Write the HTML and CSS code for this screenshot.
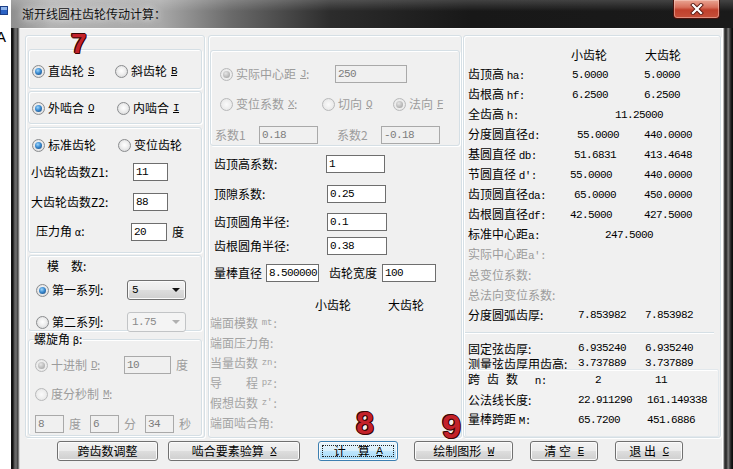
FILE: index.html
```html
<!DOCTYPE html>
<html lang="zh-CN">
<head>
<meta charset="utf-8">
<title>渐开线圆柱齿轮传动计算</title>
<link rel="stylesheet" href="styles.css">
</head>
<body>
<div class="screen">
  <div class="strip"><div class="strip-icon"></div><div class="strip-a">A</div></div>
  <div class="window">
    <div class="titlebar">
      <span class="title">渐开线圆柱齿轮传动计算：</span>
      <div class="close">
        <svg width="14" height="12" viewBox="0 0 14 12"><path d="M3 2 L11 10 M11 2 L3 10" stroke="#5a1a12" stroke-width="4" stroke-linecap="square"/><path d="M3 2 L11 10 M11 2 L3 10" stroke="#fff" stroke-width="2.2" stroke-linecap="square"/></svg>
      </div>
    </div>
    <div class="body">
      <div class="fl"></div>
      <div class="client">
        <div class="cols">
          <!-- left column -->
          <div class="grp lcol">
            <div class="grp g1">
              <div class="rrow">
                <div class="opt w83"><span class="radio on"></span>直齿轮 <u class="m">S</u></div>
                <div class="opt"><span class="radio"></span>斜齿轮 <u class="m">B</u></div>
              </div>
            </div>
            <div class="grp g2">
              <div class="rrow">
                <div class="opt w85"><span class="radio on"></span>外啮合 <u class="m">O</u></div>
                <div class="opt"><span class="radio"></span>内啮合 <u class="m">I</u></div>
              </div>
            </div>
            <div class="grp g3">
              <div class="rrow pl1">
                <div class="opt w86"><span class="radio on"></span>标准齿轮</div>
                <div class="opt"><span class="radio"></span>变位齿轮</div>
              </div>
              <div class="frow">
                <span class="lab w102">小齿轮齿数Z1:</span><span class="inp w35">11</span>
              </div>
              <div class="frow">
                <span class="lab w102">大齿轮齿数Z2:</span><span class="inp w35">88</span>
              </div>
              <div class="frow pl5">
                <span class="lab w95">压力角 <span class="sym">α</span>:</span><span class="inp w36">20</span><span class="unit">度</span>
              </div>
            </div>
            <div class="grp g4a">
              <div class="mlabel">模　数:</div>
              <div class="crow first">
                <div class="opt w91"><span class="radio on"></span>第一系列:</div>
                <div class="combo"><span class="m">5</span><span class="arrow"></span></div>
              </div>
              <div class="crow second">
                <div class="opt w91"><span class="radio"></span>第二系列:</div>
                <div class="combo dis"><span class="m">1.75</span><span class="arrow"></span></div>
              </div>
            </div>
            <fieldset class="g4b">
              <legend>螺旋角 <span class="sym">β</span>:</legend>
              <div class="drow r1">
                <div class="opt w89 dt"><span class="radio dis on"></span>十进制 <u class="m">D</u>:</div>
                <span class="inp dis w47">10</span><span class="unit dt">度</span>
              </div>
              <div class="drow r2">
                <div class="opt dt"><span class="radio dis"></span>度分秒制 <u class="m">M</u>:</div>
              </div>
              <div class="drow r3">
                <span class="inp dis w29">8</span><span class="unit dt">度</span>
                <span class="inp dis w29 ml9">6</span><span class="unit dt">分</span>
                <span class="inp dis w29 ml9">34</span><span class="unit dt">秒</span>
              </div>
            </fieldset>
          </div>

          <!-- middle column -->
          <div class="grp mcol">
            <div class="grp mg">
              <div class="rrow">
                <div class="opt w115 dt"><span class="radio dis on"></span>实际中心距 <u class="m">J</u>:</div>
                <span class="inp dis w72">250</span>
              </div>
              <div class="rrow mt14">
                <div class="opt w102 dt"><span class="radio dis"></span>变位系数 <u class="m">X</u>:</div>
                <div class="opt w71 dt"><span class="radio dis"></span>切向 <u class="m">Q</u></div>
                <div class="opt dt"><span class="radio dis on"></span>法向 <u class="m">F</u></div>
              </div>
              <div class="krow">
                <span class="lab w44 dt">系数1</span><span class="inp dis w59">0.18</span>
                <span class="lab w44 dt ml19">系数2</span><span class="inp dis w59">-0.18</span>
              </div>
            </div>
            <div class="mrow m9"><span class="lab w112">齿顶高系数:</span><span class="inp w59">1</span></div>
            <div class="mrow m12"><span class="lab w113">顶隙系数:</span><span class="inp w59">0.25</span></div>
            <div class="mrow m10"><span class="lab w113">齿顶圆角半径:</span><span class="inp w60">0.1</span></div>
            <div class="mrow m6"><span class="lab w113">齿根圆角半径:</span><span class="inp w60">0.38</span></div>
            <div class="mrow m9">
              <span class="lab w52">量棒直径</span><span class="inp w53">8.500000</span>
              <span class="lab w53 ml10">齿轮宽度</span><span class="inp w54">100</span>
            </div>
            <div class="mhead"><span class="w73">小齿轮</span><span>大齿轮</span></div>
            <div class="grow">端面模数 <span class="m small">mt</span>:</div>
            <div class="grow">端面压力角:</div>
            <div class="grow">当量齿数 <span class="m small">zn</span>:</div>
            <div class="grow">导　　程 <span class="m small">pz</span>:</div>
            <div class="grow">假想齿数 <span class="m small">z'</span>:</div>
            <div class="grow">端面啮合角:</div>
          </div>

          <!-- right column -->
          <div class="grp rcol">
            <div class="res head"><span></span><span class="v o1 cj">小齿轮</span><span class="v o1 cj">大齿轮</span></div>
            <div class="res"><span>齿顶高 <b class="m">ha:</b></span><span class="v o2">5.0000</span><span class="v">5.0000</span></div>
            <div class="res"><span>齿根高 <b class="m">hf:</b></span><span class="v o2">6.2500</span><span class="v">6.2500</span></div>
            <div class="res"><span>全齿高 <b class="m">h:</b></span><span class="v span2 o45">11.25000</span></div>
            <div class="res"><span>分度圆直径<b class="m">d:</b></span><span class="v o7">55.0000</span><span class="v">440.0000</span></div>
            <div class="res"><span>基圆直径 <b class="m">db:</b></span><span class="v o4">51.6831</span><span class="v">413.4648</span></div>
            <div class="res"><span>节圆直径 <b class="m">d':</b></span><span class="v">55.0000</span><span class="v">440.0000</span></div>
            <div class="res"><span>齿顶圆直径<b class="m">da:</b></span><span class="v o4">65.0000</span><span class="v">450.0000</span></div>
            <div class="res"><span>齿根圆直径<b class="m">df:</b></span><span class="v">42.5000</span><span class="v">427.5000</span></div>
            <div class="res"><span>标准中心距<b class="m">a:</b></span><span class="v span2 o35">247.5000</span></div>
            <div class="res dt"><span>实际中心距<b class="m">a':</b></span></div>
            <div class="res dt"><span>总变位系数:</span></div>
            <div class="res dt"><span>总法向变位系数:</span></div>
            <div class="res"><span>分度圆弧齿厚:</span><span class="v o8">7.853982</span><span class="v o1">7.853982</span></div>
            <div class="sub s2">
              <div class="res r15"><span>固定弦齿厚:</span><span class="v o8">6.935240</span><span class="v o1">6.935240</span></div>
              <div class="res r15"><span>测量弦齿厚用齿高:</span><span class="v o8">3.737889</span><span class="v o1">3.737889</span></div>
            </div>
            <div class="sub s3">
              <div class="res"><span class="sp">跨齿数 <b class="m">n:</b></span><span class="v o25">2</span><span class="v o11">11</span></div>
              <div class="res"><span>公法线长度:</span><span class="v o8">22.911290</span><span class="v o3">161.149338</span></div>
              <div class="res"><span>量棒跨距 <b class="m">M:</b></span><span class="v o8">65.7200</span><span class="v o3">451.6886</span></div>
            </div>
          </div>
        </div>

        <div class="btns">
          <div class="btn b1">跨齿数调整</div>
          <div class="btn b2">啮合要素验算 <u class="m">X</u></div>
          <div class="btn b3 focus">计　算 <u class="m">A</u></div>
          <div class="btn b4">绘制图形 <u class="m">W</u></div>
          <div class="btn b5">清 空 <u class="m">E</u></div>
          <div class="btn b6">退 出 <u class="m">C</u></div>
        </div>

        <span class="mark k7">7</span>
        <span class="mark k8">8</span>
        <span class="mark k9">9</span>
      </div>
      <div class="fr"></div>
    </div>
  </div>
</div>
</body>
</html>
```

FILE: styles.css
```css
* { box-sizing: border-box; }
html, body { margin: 0; padding: 0; }
body {
  width: 733px; height: 469px; overflow: hidden;
  font: 12px/16px "Noto Sans CJK SC", "Noto Sans", sans-serif;
  color: #000; background: #fff;
}
u { text-decoration: underline; text-underline-offset: 1px; }
b { font-weight: normal; }
.m { font-family: "Liberation Mono", "DejaVu Sans Mono", monospace; font-size: 11px; letter-spacing: -0.6px; }
.small { font-size: 9px; letter-spacing: 0; }
.sym { font-family: "DejaVu Sans", sans-serif; font-size: 10px; }
.dt { color: #9c9c9c; }

.screen { display: flex; width: 733px; height: 469px; position: relative; overflow: hidden; }
.strip { width: 11px; background: #fff; overflow: hidden; display: flex; flex-direction: column; }
.strip-icon { width: 8px; height: 9px; margin-top: 6px; background: #2b62c4; border: 1px solid #1c3f88; box-shadow: inset 0 3px 0 #8fb4ea; }
.strip-a { font: 15px/15px "Liberation Sans", sans-serif; margin: 14px 0 0 -4px; }

.window { flex: 1; display: flex; flex-direction: column; background: #1e1e1e; }
.titlebar {
  height: 28px; display: flex; align-items: flex-start;
  background:
    linear-gradient(to bottom, rgba(255,255,255,.18), rgba(255,255,255,0) 40%),
    linear-gradient(to right, #8e8e8e 0, #b2b2b2 40px, #a8a8a8 150px, #6a6a6a 220px, #2c2c2c 320px, #181818 460px, #1a1a1a 100%);
}
.title { margin: 6px 0 0 11px; color: #111; text-shadow: 0 0 6px #e6e6e6, 0 0 10px #dcdcdc; }
.close {
  margin-left: auto; margin-right: 13px; width: 47px; height: 19px;
  border: 1px solid #4a130c; border-top: none; border-radius: 0 0 4px 4px;
  background: linear-gradient(#e9a593 0, #d8705c 40%, #c0402c 55%, #c6503a 100%);
  box-shadow: inset 0 0 0 1px rgba(255,220,210,.45);
  display: flex; align-items: center; justify-content: center;
}

.body { flex: 1; display: flex; }
.fl { width: 9px; background: linear-gradient(to right, #111 0, #111 2px, #4e4e4e 3px, #707070 5px, #3a3a3a 7px, #bdbdbd 8px, #e8e8e8 9px); }
.fr { width: 11px; background: linear-gradient(to right, #fff 0, #fff 1px, #6a6a6a 2px, #2a2a2a 3px, #3a3a3a 5px, #858585 6px, #3a3a3a 8px, #0e0e0e 10px); }

.client {
  flex: 1; position: relative; background: #f0f0f0;
  border-top: 1px solid #fafafa;
  padding: 6px 1px 0 5px;
  display: flex; flex-direction: column;
}
.cols { display: flex; height: 403px; }

.grp { border: 1px solid #d5dfe5; border-radius: 3px; box-shadow: inset 1px 1px 0 #fff, 1px 1px 0 #fff; }

/* ---------- left column ---------- */
.lcol { width: 180px; margin-right: 3px; display: flex; flex-direction: column; padding: 13px 2px 0 2px; }
.g1 { height: 40px; padding: 13px 0 0 3px; }
.g2 { height: 33px; margin-top: 2px; padding: 8px 0 0 3px; }
.g3 { height: 126px; margin-top: 3px; padding: 9px 0 0 2px; }
.g4a { height: 76px; margin-top: 2px; padding: 2px 0 0 7px; }

.rrow { display: flex; align-items: center; height: 16px; }
.pl1 { padding-left: 1px; }
.opt { display: flex; align-items: center; white-space: nowrap; }
.opt u { margin-left: 4px; }
.radio {
  width: 13px; height: 13px; flex: none; margin-right: 3px; position: relative;
  border-radius: 50%; border: 1px solid #8a8c8e;
  background: radial-gradient(circle at 50% 45%, #ffffff 0, #eeeeee 45%, #cfd0d2 100%);
}
.radio.on::after {
  content: ""; position: absolute; left: 2px; top: 2px; width: 7px; height: 7px; border-radius: 50%;
  background: radial-gradient(circle at 40% 35%, #9fd6fb 0, #3a8ad0 45%, #163f70 100%);
}
.radio.dis { border-color: #b8b9ba; background: radial-gradient(circle, #fafafa 0, #ececec 60%, #dcdcdc 100%); }
.radio.dis.on::after { background: radial-gradient(circle at 40% 35%, #e6e6e6 0, #b8b8b8 60%, #9a9a9a 100%); }

.w29 { width: 29px; } .w35 { width: 35px; } .w36 { width: 36px; } .w44 { width: 44px; }
.w47 { width: 47px; } .w52 { width: 52px; } .w53 { width: 53px; } .w54 { width: 54px; }
.w59 { width: 59px; } .w60 { width: 60px; } .w71 { width: 71px; } .w72 { width: 72px; } .w73 { width: 73px; }
.w83 { width: 83px; } .w85 { width: 85px; } .w86 { width: 86px; } .w89 { width: 89px; } .w91 { width: 91px; }
.w95 { width: 95px; } .w102 { width: 102px; } .w112 { width: 112px; } .w113 { width: 113px; } .w115 { width: 115px; }
.ml9 { margin-left: 9px; } .ml10 { margin-left: 10px; } .ml19 { margin-left: 19px; }

.frow { display: flex; align-items: center; height: 30px; }
.g3 .rrow + .frow { margin-top: 4px; }
.pl5 { padding-left: 5px; }
.lab { white-space: nowrap; flex: none; }
.unit { margin-left: 5px; }

.inp {
  height: 18px; flex: none; display: flex; align-items: center; padding-left: 2px;
  background: #fff; border: 1px solid #6e6e6e;
  font-family: "Liberation Mono", "DejaVu Sans Mono", monospace; font-size: 11px; letter-spacing: -0.6px;
}
.inp.dis { background: #f0f0f0; border-color: #a9a9a9; color: #7c7c7c; }

.mlabel { height: 16px; margin-left: 11px; }
.crow { display: flex; align-items: center; height: 20px; }
.crow.first { margin-top: 6px; }
.crow.second { margin-top: 12px; }
.combo {
  width: 59px; height: 20px; display: flex; align-items: center; justify-content: space-between;
  padding: 0 5px 0 4px; border: 1px solid #707070; border-radius: 3px;
  background: linear-gradient(#f3f3f3 0, #ebebeb 48%, #dddddd 52%, #cfcfcf 100%);
  box-shadow: inset 0 0 0 1px #fbfbfb;
}
.arrow { width: 0; height: 0; border-left: 4px solid transparent; border-right: 4px solid transparent; border-top: 4px solid #111; }
.combo.dis { border-color: #c2c4c6; background: #f4f4f4; color: #8a8a8a; box-shadow: none; }
.combo.dis .arrow { border-top-color: #b0b0b0; }

.g4b {
  margin: 2px 0 0 0; padding: 0 0 0 6px; height: 103px; min-width: 0;
  border: 1px solid #d5dfe5; border-radius: 3px; box-shadow: inset 1px 1px 0 #fff, 1px 1px 0 #fff;
}
.g4b legend { padding: 0 1px 0 0; line-height: 12px; height: 12px; margin-left: -1px; }
.drow { display: flex; align-items: center; height: 18px; }
.drow.r1 { margin-top: 11px; }
.drow.r2 { margin-top: 12px; height: 16px; }
.drow.r3 { margin-top: 13px; }

/* ---------- middle column ---------- */
.mcol { width: 254px; margin-right: 1px; padding: 14px 1px 0 1px; display: flex; flex-direction: column; }
.mg { height: 96px; padding: 15px 0 0 9px; }
.mt14 { margin-top: 14px; }
.krow { display: flex; align-items: center; height: 18px; margin: 14px 0 0 -5px; }
.mrow { display: flex; align-items: center; height: 18px; margin-left: 4px; }
.m6 { margin-top: 6px; } .m9 { margin-top: 9px; } .m10 { margin-top: 10px; } .m12 { margin-top: 12px; }
.mhead { display: flex; height: 16px; align-items: center; margin: 15px 0 0 105px; }
.mhead span { display: inline-block; }
.grow { height: 20px; display: flex; align-items: center; color: #a4a4a4; white-space: pre; }
.grow .m { margin: 0 1px; }

/* ---------- right column ---------- */
.rcol { width: 258px; padding: 9px 0 0 4px; display: flex; flex-direction: column; }
.res { display: grid; grid-template-columns: 102px 74px 1fr; height: 20px; align-items: center; white-space: nowrap; }
.res.r15 { height: 15px; line-height: 13px; }
.res .v { font-family: "Liberation Mono", "DejaVu Sans Mono", monospace; font-size: 11px; letter-spacing: -0.6px; }
.res .v.cj { font-family: "Noto Sans CJK SC", sans-serif; font-size: 12px; letter-spacing: 0; }
.res.head { height: 20px; }
.span2 { grid-column: 2 / 4; }
.o1 { padding-left: 1px; } .o2 { padding-left: 2px; } .o3 { padding-left: 3px; } .o4 { padding-left: 4px; }
.o7 { padding-left: 7px; } .o8 { padding-left: 8px; } .o11 { padding-left: 11px; } .o25 { padding-left: 25px; }
.o35 { padding-left: 35px; } .o45 { padding-left: 45px; }
.sp { letter-spacing: 7px; }
.sp b { letter-spacing: -0.6px; }
.sub { margin-left: -3px; padding-left: 3px; border-top: 1px solid #d5dfe5; box-shadow: inset 0 1px 0 #fff; }
.s2 { margin-top: 7px; height: 37px; padding-top: 8px; margin-right: 6px; }
.s3 { height: 68px; border: 1px solid #e2e8ec; border-radius: 2px; margin-right: 1px; padding-left: 2px; background: #f2f2f2; }

/* ---------- buttons ---------- */
.btns { display: flex; margin-top: 3px; }
.btn {
  height: 20px; position: relative; display: flex; align-items: center; justify-content: center; white-space: pre;
  border: 1px solid #707070; border-radius: 3px;
  background: linear-gradient(#f2f2f2 0, #ebebeb 48%, #dddddd 52%, #cfcfcf 100%);
  box-shadow: inset 0 0 0 1px #fbfbfb;
}
.btn u { margin-left: 4px; }
.btn.focus { border-color: #3c7fb1; background: linear-gradient(#eaf6fd 0, #d9f0fc 48%, #bee6fd 52%, #a7d9f5 100%); }
.btn.focus::after { content: ""; position: absolute; left: 3px; top: 3px; right: 3px; bottom: 3px; border: 1px dotted #222; }
.b1 { margin-left: 32px; width: 101px; }
.b2 { margin-left: 10px; width: 132px; }
.b3 { margin-left: 18px; width: 80px; }
.b4 { margin-left: 16px; width: 99px; }
.b5 { margin-left: 17px; width: 68px; }
.b6 { margin-left: 17px; width: 68px; }

/* ---------- red annotation numbers ---------- */
.mark {
  position: absolute; font-family: "Liberation Sans", sans-serif; font-weight: bold; line-height: 1;
  color: #c4222a;
  text-shadow: 1px 0 0 #3a0606, -1px 0 0 #3a0606, 0 1px 0 #3a0606, 0 -1px 0 #3a0606, 1px 1px 0 #3a0606, -1px -1px 0 #3a0606;
}
.k7 { font-size: 28px; left: 51px; top: 1px; }
.k8 { font-size: 32px; left: 336px; top: 378px; }
.k9 { font-size: 34px; left: 422px; top: 380px; }
```
